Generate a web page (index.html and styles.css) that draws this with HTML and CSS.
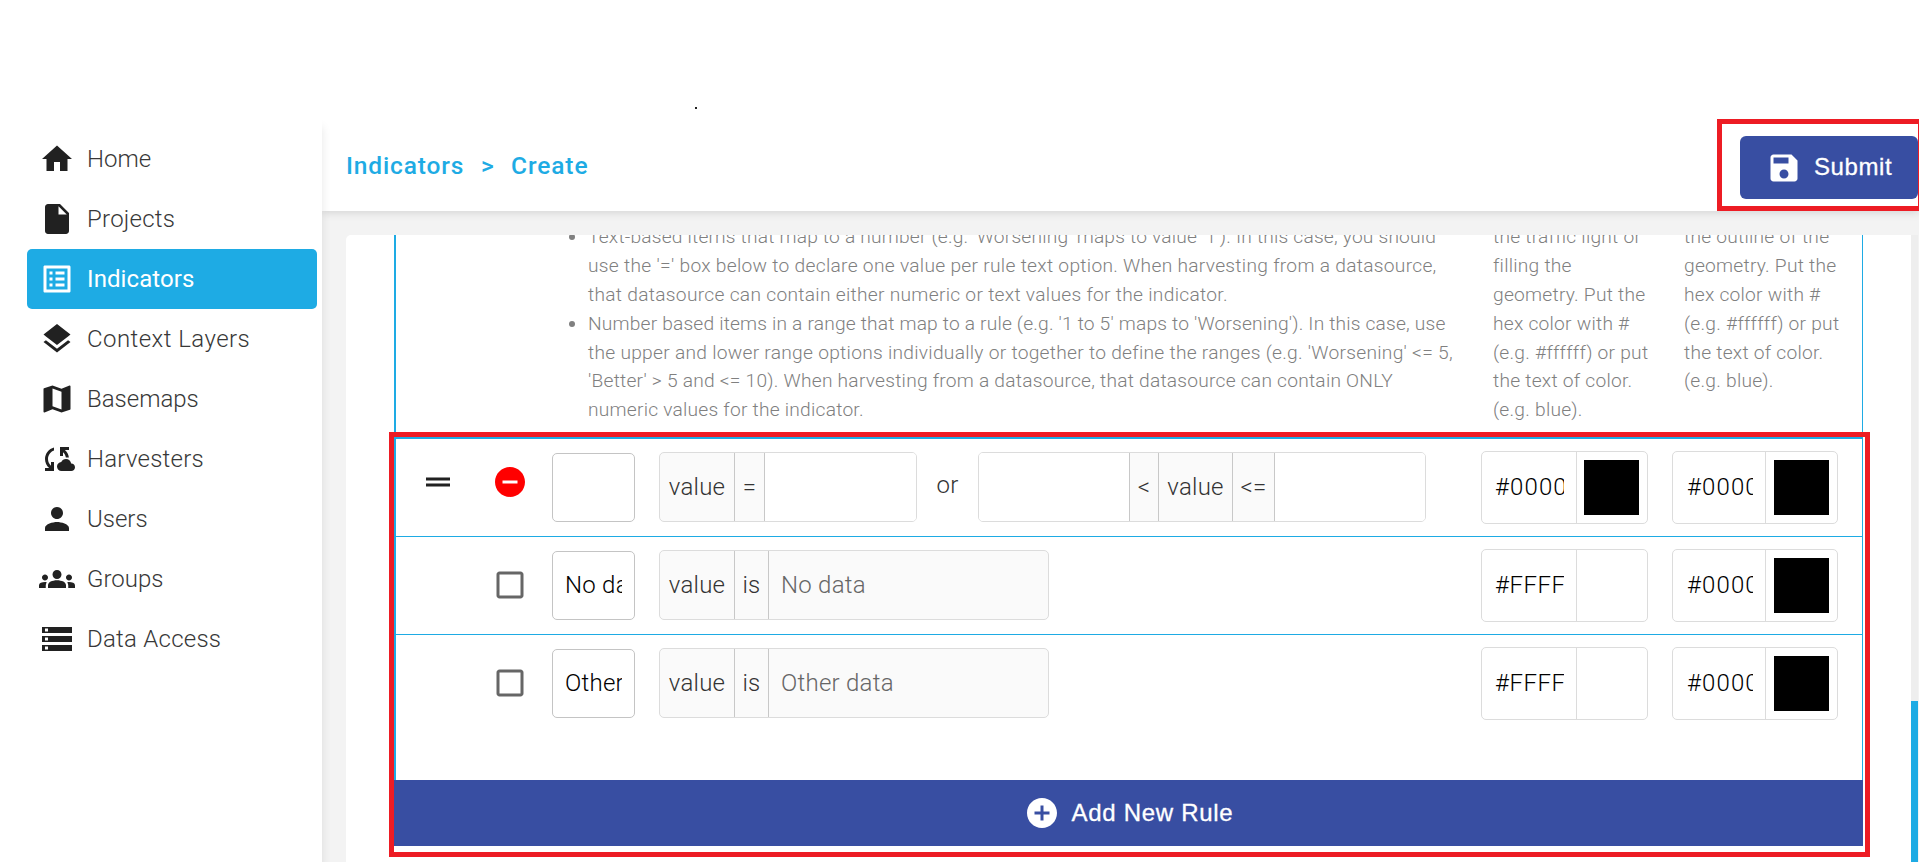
FILE: index.html
```
<!DOCTYPE html>
<html lang="en">
<head>
<meta charset="utf-8">
<title>Indicators - Create</title>
<link rel="stylesheet" href="styles.css">
</head>
<body>
<div class="topbar"><span class="dot"></span></div>
<div class="app">
  <nav class="sidebar">
    <a class="nav-item"><svg class="icon" viewBox="0 0 24 24"><path d="M10 20v-6h4v6h5v-8h3L12 3 2 12h3v8z"/></svg><span class="ls-0">Home</span></a>
    <a class="nav-item"><svg class="icon" viewBox="0 0 24 24"><path d="M6 2c-1.1 0-1.99.9-1.99 2L4 20c0 1.1.89 2 1.99 2H18c1.1 0 2-.9 2-2V8l-6-6H6zm7 7V3.5L18.5 9H13z"/></svg><span>Projects</span></a>
    <a class="nav-item active"><svg class="icon" viewBox="0 0 24 24"><path d="M19 5v14H5V5h14m1.1-2H3.9c-.5 0-.9.4-.9.9v16.2c0 .4.4.9.9.9h16.2c.4 0 .9-.5.9-.9V3.9c0-.5-.5-.9-.9-.9zM11 7h6v2h-6V7zm0 4h6v2h-6v-2zm0 4h6v2h-6zM7 7h2v2H7zm0 4h2v2H7zm0 4h2v2H7z"/></svg><span>Indicators</span></a>
    <a class="nav-item"><svg class="icon" viewBox="0 0 24 24"><path d="m11.99 18.54-7.37-5.73L3 14.07l9 7 9-7-1.63-1.27-7.38 5.74zM12 16l7.36-5.73L21 9l-9-7-9 7 1.63 1.27L12 16z"/></svg><span class="ls-wide">Context Layers</span></a>
    <a class="nav-item"><svg class="icon" viewBox="0 0 24 24"><path d="m20.5 3-.16.03L15 5.1 9 3 3.36 4.9c-.21.07-.36.25-.36.48V20.5c0 .28.22.5.5.5l.16-.03L9 18.9l6 2.1 5.64-1.9c.21-.07.36-.25.36-.48V3.5c0-.28-.22-.5-.5-.5zM15 19l-6-2.11V5l6 2.11V19z"/></svg><span class="ls-0">Basemaps</span></a>
    <a class="nav-item"><svg class="icon" viewBox="0 0 24 24"><path d="M21.5 14.98c-.02 0-.03 0-.05.01C21.2 13.3 19.76 12 18 12c-1.4 0-2.6.83-3.16 2.02C13.26 14.1 12 15.4 12 17c0 1.66 1.34 3 3 3l6.5-.02c1.38 0 2.5-1.12 2.5-2.5s-1.12-2.5-2.5-2.5zM10 4.26v2.09C7.67 7.18 6 9.39 6 12c0 1.77.78 3.34 2 4.44V14h2v6H4v-2h2.73C5.06 16.54 4 14.4 4 12c0-3.73 2.55-6.85 6-7.74zM20 6h-2.73c1.43 1.26 2.41 3.01 2.66 5h-2.02c-.23-1.36-.93-2.55-1.91-3.44V10h-2V4h6v2z"/></svg><span>Harvesters</span></a>
    <a class="nav-item"><svg class="icon" viewBox="0 0 24 24"><path d="M12 12c2.21 0 4-1.79 4-4s-1.79-4-4-4-4 1.79-4 4 1.79 4 4 4zm0 2c-2.67 0-8 1.34-8 4v2h16v-2c0-2.66-5.33-4-8-4z"/></svg><span class="ls-0">Users</span></a>
    <a class="nav-item"><svg class="icon" viewBox="0 0 24 24"><path d="M12 12.75c1.63 0 3.07.39 4.24.9 1.08.48 1.76 1.56 1.76 2.73V18H6v-1.61c0-1.18.68-2.26 1.76-2.73 1.17-.52 2.61-.91 4.24-.91zM4 13c1.1 0 2-.9 2-2s-.9-2-2-2-2 .9-2 2 .9 2 2 2zm1.13 1.1c-.37-.06-.74-.1-1.13-.1-.99 0-1.93.21-2.78.58C.48 14.9 0 15.62 0 16.43V18h4.5v-1.61c0-.83.23-1.61.63-2.29zM20 13c1.1 0 2-.9 2-2s-.9-2-2-2-2 .9-2 2 .9 2 2 2zm4 3.43c0-.81-.48-1.53-1.22-1.85-.85-.37-1.79-.58-2.78-.58-.39 0-.76.04-1.13.1.4.68.63 1.46.63 2.29V18H24v-1.57zM12 6c1.66 0 3 1.34 3 3s-1.34 3-3 3-3-1.34-3-3 1.34-3 3-3z"/></svg><span class="ls-0">Groups</span></a>
    <a class="nav-item"><svg class="icon" viewBox="0 0 24 24"><path d="M2 20h20v-4H2v4zm2-3h2v2H4v-2zM2 4v4h20V4H2zm4 3H4V5h2v2zm-4 7h20v-4H2v4zm2-3h2v2H4v-2z"/></svg><span>Data Access</span></a>
  </nav>
  <main class="main">
    <header class="header">
      <div class="crumbs"><span class="crumb-root">Indicators</span><span class="crumb-sep">&gt;</span><span>Create</span></div>
      <button class="submit"><svg class="icon" viewBox="0 0 24 24"><path d="M17 3H5c-1.11 0-2 .9-2 2v14c0 1.1.89 2 2 2h14c1.1 0 2-.9 2-2V7l-4-4zm-5 16c-1.66 0-3-1.34-3-3s1.34-3 3-3 3 1.34 3 3-1.34 3-3 3zm3-10H5V5h10v4z"/></svg><span>Submit</span></button>
    </header>
    <div class="scroll">
      <section class="card">
        <div class="table">
          <div class="row head">
            <ul class="help">
              <li><span class="ls-20">Text-based items that map to a number (e.g. 'Worsening' maps to value '1'). In this case, you should</span><br>
                <span class="ls-29">use the '=' box below to declare one value per rule text option. When harvesting from a datasource,</span><br>
                <span class="ls-29">that datasource can contain either numeric or text values for the indicator.</span></li>
              <li><span class="ls-18">Number based items in a range that map to a rule (e.g. '1 to 5' maps to 'Worsening'). In this case, use</span><br>
                <span class="ls-27">the upper and lower range options individually or together to define the ranges (e.g. 'Worsening' &lt;= 5,</span><br>
                <span class="ls-23">'Better' &gt; 5 and &lt;= 10). When harvesting from a datasource, that datasource can contain ONLY</span><br>
                <span class="ls-23">numeric values for the indicator.</span></li>
            </ul>
            <p class="color-help">the traffic light or<br>filling the<br>geometry. Put the<br>hex color with #<br>(e.g. #ffffff) or put<br>the text of color.<br>(e.g. blue).</p>
            <p class="color-help">the outline of the<br>geometry. Put the<br>hex color with #<br>(e.g. #ffffff) or put<br>the text of color.<br>(e.g. blue).</p>
          </div>
          <div class="row rule first">
            <svg class="icon drag" viewBox="0 0 24 24"><path d="M20 9H4v2h16V9zM4 15h16v-2H4v2z"/></svg>
            <svg class="icon remove" viewBox="0 0 24 24"><path d="M12 2C6.48 2 2 6.48 2 12s4.48 10 10 10 10-4.48 10-10S17.52 2 12 2zm5 11H7v-2h10v2z"/></svg>
            <div class="name"></div>
            <div class="values">
              <div class="group g-eq"><span class="cell c-value">value</span><span class="cell c-eq">=</span><span class="input"></span></div>
              <span class="or">or</span>
              <div class="group g-range"><span class="input"></span><span class="cell c-lt">&lt;</span><span class="cell c-mid">value</span><span class="cell c-lte">&lt;=</span><span class="input"></span></div>
            </div>
            <div class="color"><span class="hex digits"><span>#0000</span></span><span class="well"><i class="swatch"></i></span></div>
            <div class="color outline"><span class="hex digits"><span>#0000</span></span><span class="well"><i class="swatch"></i></span></div>
          </div>
          <div class="row rule">
            <span></span>
            <svg class="icon check" viewBox="0 0 24 24"><path d="M19 5v14H5V5h14m0-2H5c-1.1 0-2 .9-2 2v14c0 1.1.9 2 2 2h14c1.1 0 2-.9 2-2V5c0-1.1-.9-2-2-2z"/></svg>
            <div class="name"><span>No da</span></div>
            <div class="values"><div class="group g-is"><span class="cell c-value">value</span><span class="cell c-is">is</span><span class="cell c-text">No data</span></div></div>
            <div class="color"><span class="hex"><span>#FFFF</span></span><span class="well"></span></div>
            <div class="color outline"><span class="hex digits"><span>#0000</span></span><span class="well"><i class="swatch"></i></span></div>
          </div>
          <div class="row rule last">
            <span></span>
            <svg class="icon check" viewBox="0 0 24 24"><path d="M19 5v14H5V5h14m0-2H5c-1.1 0-2 .9-2 2v14c0 1.1.9 2 2 2h14c1.1 0 2-.9 2-2V5c0-1.1-.9-2-2-2z"/></svg>
            <div class="name"><span>Other</span></div>
            <div class="values"><div class="group g-is"><span class="cell c-value">value</span><span class="cell c-is">is</span><span class="cell c-text">Other data</span></div></div>
            <div class="color"><span class="hex"><span>#FFFF</span></span><span class="well"></span></div>
            <div class="color outline"><span class="hex digits"><span>#0000</span></span><span class="well"><i class="swatch"></i></span></div>
          </div>
        </div>
        <button class="add"><svg class="icon" viewBox="0 0 24 24"><path d="M12 2C6.48 2 2 6.48 2 12s4.48 10 10 10 10-4.48 10-10S17.52 2 12 2zm5 11h-4v4h-2v-4H7v-2h4V7h2v4h4v2z"/></svg><span>Add New Rule</span></button>
      </section>
      <div class="scrollbar"><div class="thumb"></div></div>
    </div>
  </main>
</div>
<div class="mark mark-submit"></div>
<div class="mark mark-rules"></div>
</body>
</html>
```
FILE: styles.css
```
* { box-sizing: border-box; }
body {
  margin: 0;
  height: 862px;
  position: relative;
  overflow: hidden;
  display: flex;
  flex-direction: column;
  background: #fff;
  color: #212121;
  font: 300 24px/1.2 Roboto, "Liberation Sans", sans-serif;
  letter-spacing: .25px;
}
.topbar { height: 119px; padding: 107px 0 0 695px; flex: none; }
.dot { display: block; width: 2px; height: 2px; background: #222; }
.app { flex: 1; min-height: 0; display: flex; }
.icon { width: 36px; height: 36px; fill: currentColor; flex: none; display: block; }

/* letter spacing steps */
.ls-0 { letter-spacing: 0; }
.ls-wide { letter-spacing: .45px; }
.ls-18 { letter-spacing: .18px; }
.ls-20 { letter-spacing: .2px; }
.ls-23 { letter-spacing: .23px; }
.ls-27 { letter-spacing: .27px; }
.ls-29 { letter-spacing: .287px; }

/* sidebar */
.sidebar {
  width: 322px;
  flex: none;
  padding: 10px 5px 0 27px;
  background: #fff;
  box-shadow: 0 8px 9px rgba(0, 0, 0, .1);
  clip-path: inset(0 -12px 0 0);
  position: relative;
  z-index: 1;
}
.nav-item {
  display: flex;
  align-items: center;
  gap: 12px;
  height: 60px;
  padding-left: 12px;
  border-radius: 5px;
}
.nav-item span { color: #383838; }
.nav-item.active { background: #1eabe4; color: #fff; font-weight: 400; letter-spacing: .1px; }
.nav-item.active span { color: #fff; }

/* header */
.main { flex: 1; min-width: 0; display: flex; flex-direction: column; background: #f3f3f3; }
.header {
  height: 92px;
  flex: none;
  display: flex;
  justify-content: space-between;
  align-items: flex-start;
  padding: 17px 1px 0 24px;
  background: #fff;
  box-shadow: 0 1px 9px rgba(0, 0, 0, .15);
  clip-path: inset(0 0 -12px 0);
}
.crumbs { display: flex; margin-top: 15px; color: #1eabe4; font-weight: 500; font-size: 24.5px; letter-spacing: .9px; }
.crumb-root { width: 135px; letter-spacing: .85px; }
.crumb-sep { width: 30px; }
button {
  border: 0;
  color: #fff;
  background: #384ea2;
  display: flex;
  align-items: center;
  font: 400 24px/1.2 "Liberation Sans", Arial, sans-serif;
  -webkit-text-stroke: .3px #fff;
}
.submit { width: 178px; height: 63px; border-radius: 6px; padding: 0 0 0 26px; gap: 12px; letter-spacing: .6px; }

/* scrolled content */
.scroll { flex: 1; min-height: 0; display: flex; padding: 24px 1px 0 24px; }
.card { flex: 1; background: #fff; border-radius: 5px 0 0 0; overflow: hidden; padding: 0 48px; }
.scrollbar { width: 7px; background: #eee; padding-top: 466px; }
.thumb { height: 200px; background: #1eabe4; }
.table { border-left: 2px solid #1eabe4; border-right: 1px solid #1eabe4; height: 545px; }
.row { display: grid; padding-left: 24px; }
.head {
  height: 204px;
  border-bottom: 2px solid #1eabe4;
  grid-template-columns: 168px 929px 191px 166px;
  padding-left: 0;
  color: #808080;
  font-size: 19.2px;
  line-height: 28.8px;
  white-space: nowrap;
}
.help { grid-column: 2; margin: -11.7px 0 0; padding-left: 24px; list-style: none; }
.help li::before {
  content: "";
  display: inline-block;
  width: 6px;
  height: 6px;
  margin: 0 13px 0 -19px;
  border-radius: 50%;
  background: #808080;
  vertical-align: 3px;
}
.color-help { margin: -11.7px 0 0; letter-spacing: .24px; }
.rule {
  grid-template-columns: 72px 60px 107px 822px 191px 190px;
  align-items: start;
  height: 98px;
  border-bottom: 1px solid #1eabe4;
  padding-top: 13px;
}
.rule.last { border-bottom: 0; }
.drag { margin-top: 12px; }
.remove { margin-top: 12px; color: #f00; }
.check { margin-top: 17px; color: #666; }
.name {
  width: 83px;
  height: 69px;
  margin-top: 1px;
  border: 1px solid #c4c4c4;
  border-radius: 5px;
  padding: 0 12px;
  display: flex;
  align-items: center;
  color: #000;
}
.name span, .hex span { overflow: hidden; white-space: nowrap; min-width: 0; }
.values { display: flex; align-items: flex-start; color: #333; }
.group { display: flex; height: 70px; border: 1px solid #dcdcdc; border-radius: 5px; background: #fafafa; overflow: hidden; }
.cell { display: flex; align-items: center; justify-content: center; border-right: 1px solid #c8c8c8; }
.g-eq { width: 258px; }
.g-is { width: 390px; }
.g-range { width: 448px; }
.input { flex: 1; background: #fff; }
.g-range .input:first-child { flex: 0 0 151px; border-right: 1px solid #c8c8c8; }
.c-value { width: 75px; }
.c-eq { width: 30px; }
.c-is { width: 34px; }
.c-lt { width: 29px; }
.c-mid { width: 74px; }
.c-lte { width: 42px; }
.c-text { border: 0; padding-left: 12px; color: #666; }
.or { width: 61px; text-align: center; padding-top: 19px; }
.color { display: flex; width: 167px; height: 73px; margin-top: -1px; border: 1px solid #dcdcdc; border-radius: 5px; color: #000; }
.outline { width: 166px; }
.hex { width: 95px; padding: 0 12px 0 13px; display: flex; align-items: center; border-right: 1px solid #dcdcdc; letter-spacing: .5px; }
.digits { letter-spacing: 1.1px; }
.outline .hex { width: 93px; padding-left: 14px; }
.well { flex: 1; display: flex; align-items: center; justify-content: center; padding-right: 1px; }
.outline .well { padding-right: 0; }
.swatch { width: 55px; height: 55px; background: #000; }
.add { width: 100%; height: 66px; padding: 0; justify-content: center; gap: 12px; letter-spacing: .7px; }

/* highlight frames over the page */
.mark { position: absolute; border: 5px solid #ed1c24; }
.mark-submit { left: 1717px; top: 119px; width: 206px; height: 92px; }
.mark-rules { left: 389px; top: 432px; width: 1481px; height: 425px; }
```
